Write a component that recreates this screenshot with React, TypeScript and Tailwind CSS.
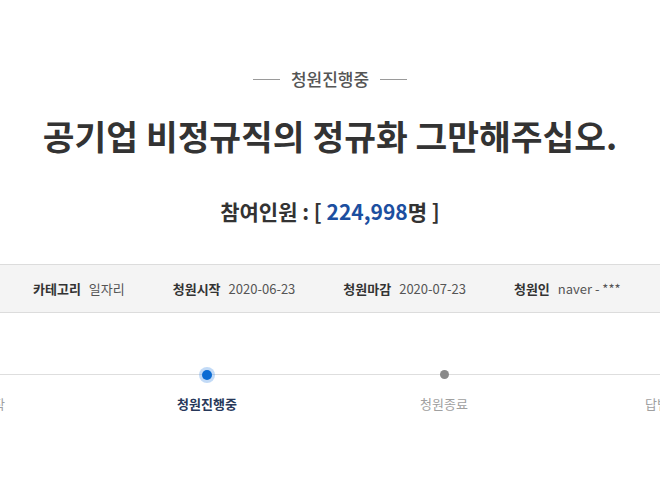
import React from "react"

const info = [
  { label: "카테고리", value: "일자리" },
  { label: "청원시작", value: "2020-06-23" },
  { label: "청원마감", value: "2020-07-23" },
  { label: "청원인", value: "naver - ***" },
]

type Step = { name: string; state: "done" | "current" | "next"; gap: string }

const steps: Step[] = [
  { name: "청원시작", state: "done", gap: "ml-[-79px]" },
  { name: "청원진행중", state: "current", gap: "ml-[106px]" },
  { name: "청원종료", state: "next", gap: "ml-[117px]" },
  { name: "답변대기", state: "next", gap: "ml-[105px]" },
]

function StepDot({ state }: { state: Step["state"] }) {
  if (state === "current") {
    return (
      <span className="flex h-[10px] w-[10px] items-center justify-center rounded-full bg-[#0b6bd3] shadow-[0_0_0_3px_rgba(80,150,230,0.35)]" />
    )
  }
  if (state === "next") {
    return <span className="h-[9px] w-[9px] rounded-full bg-[#8a8a8a]" />
  }
  return <span className="h-[9px] w-[9px]" />
}

export default function App() {
  return (
    <div className="h-[495px] w-[660px] overflow-hidden bg-white font-['Noto_Sans_CJK_KR','Noto_Sans',sans-serif] text-[#333]">
      <div className="flex items-center justify-center gap-[11px] pt-[66px]">
        <span className="h-px w-[27px] bg-[#9a9a9a]" />
        <span className="text-[17px] font-medium leading-[26px] text-[#555]">청원진행중</span>
        <span className="h-px w-[27px] bg-[#9a9a9a]" />
      </div>

      <h1 className="mt-[23px] text-center text-[34.5px] font-bold leading-[40px] text-[#333]">
        공기업 비정규직의 정규화 그만해주십오.
      </h1>

      <p className="mt-[42px] text-center text-[21px] font-bold leading-[28px] text-[#333]">
        참여인원 : [ <span className="text-[#1c4fa0]">224,998</span>명 ]
      </p>

      <div className="mt-[39px] flex h-[49px] items-center border-y border-[#dcdcdc] bg-[#f4f4f4] pl-[33px] text-[13px]">
        {info.map((item, i) => (
          <div key={item.label} className={i === 0 ? "flex items-center" : "ml-[48px] flex items-center"}>
            <span className="font-bold text-[#333]">{item.label}</span>
            <span className="ml-[8px] text-[#555]">{item.value}</span>
          </div>
        ))}
      </div>

      <div className="relative mt-[57px]">
        <div className="absolute left-0 right-0 top-[4px] h-px bg-[#dedede]" />
        <div className="relative flex">
          {steps.map((s) => (
            <div key={s.name} className={`${s.gap} flex w-[120px] shrink-0 flex-col items-center`}>
              <div className="flex h-[9px] items-center">
                <StepDot state={s.state} />
              </div>
              <span
                className={
                  s.state === "current"
                    ? "mt-[15px] text-[13px] font-bold leading-[19px] text-[#27385a]"
                    : "mt-[15px] text-[13px] leading-[19px] text-[#a0a0a0]"
                }
              >
                {s.name}
              </span>
            </div>
          ))}
        </div>
      </div>
    </div>
  )
}
